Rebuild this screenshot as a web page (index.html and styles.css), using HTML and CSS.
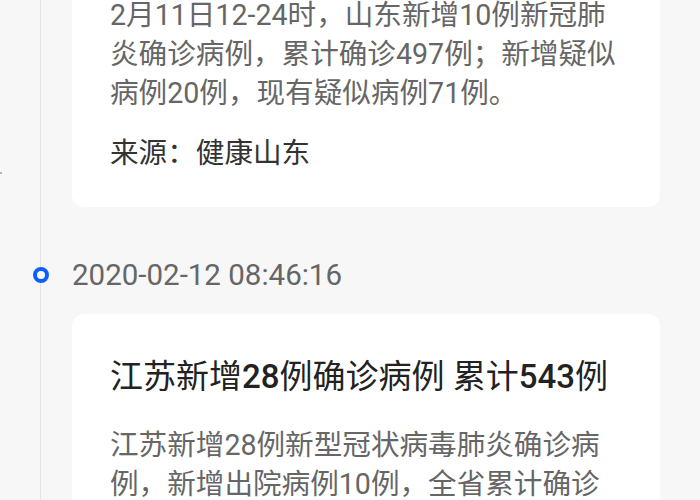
FILE: index.html
```html
<!DOCTYPE html>
<html lang="zh-CN">
<head>
<meta charset="utf-8">
<title>疫情动态</title>
<link rel="stylesheet" href="styles.css">
</head>
<body>
<div class="timeline">
  <span class="edge-mark"></span>
  <div class="card card-first">
    <p class="body">2月11日12-24时，山东新增10例新冠肺炎确诊病例，累计确诊497例；新增疑似病例20例，现有疑似病例71例。</p>
    <p class="source">来源：健康山东</p>
  </div>
  <div class="date-row">
    <span class="dot"></span>
    <span class="date">2020-02-12 08:46:16</span>
  </div>
  <div class="card">
    <h2 class="title">江苏新增<span class="num">28</span>例确诊病例 累计<span class="num">543</span>例</h2>
    <p class="body">江苏新增28例新型冠状病毒肺炎确诊病例，新增出院病例10例，全省累计确诊543例，其中无锡市新增5例。</p>
  </div>
</div>
</body>
</html>
```

FILE: styles.css
```css
html, body {
  margin: 0;
  padding: 0;
  background: #f7f7f7;
  height: 100%;
  overflow: hidden;
}

body {
  font-family: "Roboto", "Noto Sans CJK SC", sans-serif;
}

.timeline {
  position: relative;
  padding: 0 40px 0 72px;
  min-height: 100%;
  box-sizing: border-box;
}

.timeline::before {
  content: "";
  position: absolute;
  left: 40px;
  top: 0;
  bottom: 0;
  width: 1px;
  background: #e4e4e4;
}

.edge-mark {
  position: absolute;
  left: 0;
  top: 216px;
  width: 2px;
  height: 2px;
  background: #b5b5b5;
}

.card {
  background: #ffffff;
  border-radius: 12px;
  padding: 40px 42.5px 34px 38px;
}

.card-first {
  margin-top: -44px;
}

.body {
  margin: 0;
  font-size: 28.6px;
  line-height: 39px;
  color: #666666;
}

.source {
  margin: 21px 0 0 0;
  font-size: 28.6px;
  line-height: 39px;
  color: #333333;
}

.title {
  margin: 0 0 26px 0;
  font-size: 33px;
  line-height: 46px;
  font-weight: 400;
  color: #222222;
}

.num {
  font-weight: 500;
}

.date-row {
  position: relative;
  display: flex;
  align-items: center;
  height: 40px;
  margin: 48px 0 19px 0;
}

.dot {
  position: absolute;
  left: -40px;
  top: 50%;
  width: 8px;
  height: 8px;
  border: 4px solid #0a5fff;
  border-radius: 50%;
  background: #ffffff;
  transform: translate(-50%, -50%);
  margin-left: 8.5px;
}

.date {
  font-size: 29.5px;
  color: #666666;
}
```
